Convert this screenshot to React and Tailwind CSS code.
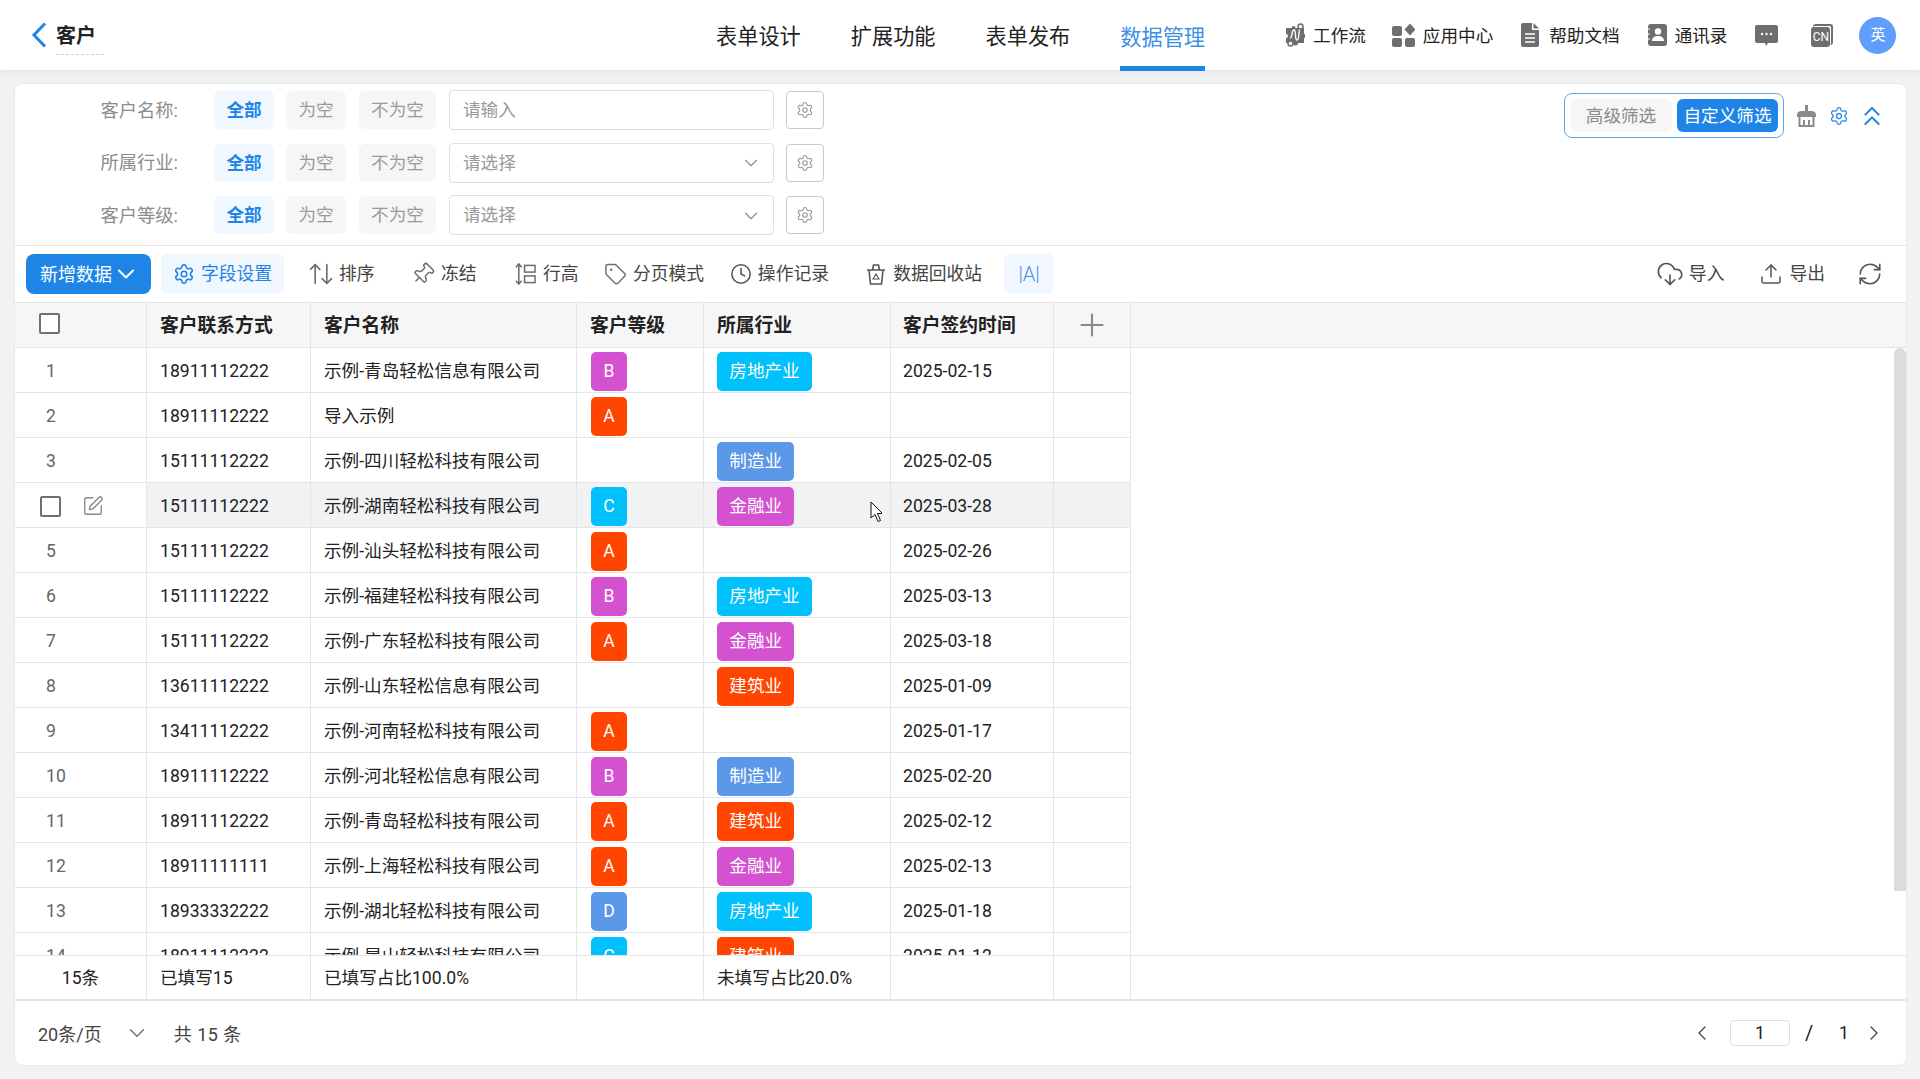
import {
  ArrowUpDown,
  ChevronDown,
  ChevronLeft,
  ChevronRight,
  ChevronsUp,
  Clock,
  CloudDownload,
  Pin,
  Plus,
  RefreshCw,
  Settings,
  SquarePen,
  Tag,
  Upload,
} from "lucide-react";

const levelColors = {
  A: "bg-[#ff4500]",
  B: "bg-[#d452cf]",
  C: "bg-[#00c1fb]",
  D: "bg-[#5c98e8]",
};

const industryColors = {
  房地产业: "bg-[#00c1fb]",
  制造业: "bg-[#5c98e8]",
  金融业: "bg-[#d452cf]",
  建筑业: "bg-[#ff4500]",
};

const rows = [
  ["18911112222", "示例-青岛轻松信息有限公司", "B", "房地产业", "2025-02-15"],
  ["18911112222", "导入示例", "A", "", ""],
  ["15111112222", "示例-四川轻松科技有限公司", "", "制造业", "2025-02-05"],
  ["15111112222", "示例-湖南轻松科技有限公司", "C", "金融业", "2025-03-28"],
  ["15111112222", "示例-汕头轻松科技有限公司", "A", "", "2025-02-26"],
  ["15111112222", "示例-福建轻松科技有限公司", "B", "房地产业", "2025-03-13"],
  ["15111112222", "示例-广东轻松科技有限公司", "A", "金融业", "2025-03-18"],
  ["13611112222", "示例-山东轻松信息有限公司", "", "建筑业", "2025-01-09"],
  ["13411112222", "示例-河南轻松科技有限公司", "A", "", "2025-01-17"],
  ["18911112222", "示例-河北轻松信息有限公司", "B", "制造业", "2025-02-20"],
  ["18911112222", "示例-青岛轻松科技有限公司", "A", "建筑业", "2025-02-12"],
  ["18911111111", "示例-上海轻松科技有限公司", "A", "金融业", "2025-02-13"],
  ["18933332222", "示例-湖北轻松科技有限公司", "D", "房地产业", "2025-01-18"],
  ["18911112222", "示例-昆山轻松科技有限公司", "C", "建筑业", "2025-01-12"],
];

const cell = "flex items-center border-r border-[#e5e5e7] h-full shrink-0 pt-[2px]";

function WorkflowIcon() {
  return (
    <svg viewBox="0 0 20 24" className="w-[20px] h-[24px] shrink-0" fill="none">
      <path d="M1 5h5.5a2 2 0 0 1 4 0H19v6a2 2 0 0 1 0 4v5h-6a2.5 2.5 0 0 1-5 0H1v-5a2 2 0 0 0 0-4z" fill="#6e6e6e" />
      <path d="M5 15c3 0 1-8 4-8s0 10 3 10 1-13 4-13" stroke="#fff" strokeWidth="1.4" />
      <circle cx="15.5" cy="3.5" r="2.5" fill="#fff" stroke="#6e6e6e" strokeWidth="1.5" />
      <circle cx="5.5" cy="20.5" r="2.5" fill="#fff" stroke="#6e6e6e" strokeWidth="1.5" />
    </svg>
  );
}

function AppsIcon() {
  return (
    <svg viewBox="0 0 23 24" className="w-[23px] h-[24px] shrink-0" fill="#6e6e6e">
      <rect x="0" y="3" width="10" height="10" rx="2" />
      <rect x="0" y="15" width="10" height="9" rx="2" />
      <rect x="13" y="15" width="10" height="9" rx="2" />
      <path d="M18 0.5l5.5 6-5.5 6-5.5-6z" />
    </svg>
  );
}

function DocIcon() {
  return (
    <svg viewBox="0 0 18 24" className="w-[18px] h-[24px] shrink-0 mr-[2px]">
      <path d="M2 0h9v7h7v15a2 2 0 0 1-2 2H2a2 2 0 0 1-2-2V2a2 2 0 0 1 2-2z" fill="#6e6e6e" />
      <path d="M12.5 0L18 5.5h-5.5z" fill="#6e6e6e" />
      <path d="M4 11h10M4 15h10M4 19h10" stroke="#fff" strokeWidth="1.6" />
    </svg>
  );
}

function ContactsIcon() {
  return (
    <svg viewBox="0 0 20 22" className="w-[20px] h-[22px] shrink-0">
      <rect x="1" y="0" width="19" height="22" rx="3" fill="#6e6e6e" />
      <circle cx="11" cy="7.5" r="3.2" fill="#fff" />
      <path d="M5 17c0-3.5 2.5-5 6-5s6 1.5 6 5z" fill="#fff" />
      <path d="M0 5h3M0 10h3M0 15h3" stroke="#fff" strokeWidth="1.2" />
    </svg>
  );
}

function ChatIcon() {
  return (
    <svg viewBox="0 0 23 21" className="w-[23px] h-[21px] shrink-0">
      <path d="M2 0h19a2 2 0 0 1 2 2v14a2 2 0 0 1-2 2h-8l-2 3-1-3H2a2 2 0 0 1-2-2V2a2 2 0 0 1 2-2z" fill="#6e6e6e" />
      <circle cx="7" cy="9" r="1.2" fill="#fff" />
      <circle cx="11.5" cy="9" r="1.2" fill="#fff" />
      <circle cx="16" cy="9" r="1.2" fill="#fff" />
    </svg>
  );
}

function CnIcon() {
  return (
    <div className="relative w-[22px] h-[23px] shrink-0">
      <div className="absolute right-0 top-0 w-[20px] h-[21px] rounded-[3px] border-t-2 border-r-2 border-[#6e6e6e]" />
      <div className="absolute left-0 bottom-0 w-[19px] h-[20px] rounded-[3px] bg-[#6e6e6e] text-white text-[12px] leading-[20px] text-center">
        CN
      </div>
    </div>
  );
}

function RowHeightIcon() {
  return (
    <svg viewBox="0 0 22 24" className="w-[21px] h-[24px] shrink-0" fill="none" stroke="#6e6e6e" strokeWidth="1.6">
      <path d="M4 2v20M1 5l3-3.5L7 5M1 19l3 3.5L7 19" />
      <rect x="10" y="3" width="11" height="7" />
      <rect x="10" y="14" width="11" height="7" />
    </svg>
  );
}

function RecycleIcon() {
  return (
    <svg viewBox="0 0 20 22" className="w-[20px] h-[22px] shrink-0" fill="none" stroke="#555" strokeWidth="1.6">
      <path d="M1 7h18M3 7l1.5 14h11L17 7M6.5 7l1-5h5l1 5" />
      <path d="M10 11l-3 5h6zM10 11l1.5 2.5" strokeWidth="1.1" />
    </svg>
  );
}

function BroomIcon() {
  return (
    <svg viewBox="0 0 19 22" className="w-[19px] h-[22px] shrink-0" fill="none" stroke="#8a8a8a" strokeWidth="2">
      <path d="M9.5 0v7" strokeWidth="3" />
      <path d="M1 10c0-2 2-3 4-3h9c2 0 4 1 4 3v1H1z" fill="#8a8a8a" />
      <path d="M2.5 11v10h14V11M7 15v6M12 15v6" />
    </svg>
  );
}

function ToolItem({ icon, label, className }) {
  return (
    <div className={`flex items-center gap-[7px] text-[17.8px] text-[#444] ${className}`}>
      {icon}
      <span className="pt-[1px]">{label}</span>
    </div>
  );
}

function HeaderTool({ icon, label, className }) {
  return (
    <div className={`flex items-center gap-[8px] text-[17.6px] text-[#222] ${className}`}>
      {icon}
      <span className="pt-[2px]">{label}</span>
    </div>
  );
}

function FilterRow({ label, placeholder, select }) {
  return (
    <div className="flex items-center h-10">
      <div className="w-[199px] pr-[36px] pt-[1px] text-right text-[18.3px] text-[#8c8c8c]">{label}</div>
      <div className="w-[60px] h-[38px] pt-[1px] rounded-md bg-[#f0f7ff] text-[#1e85e6] text-[17.6px] font-bold flex items-center justify-center">
        全部
      </div>
      <div className="w-[60px] h-[38px] pt-[1px] ml-[12px] rounded-md bg-[#f6f6f6] text-[#9a9a9a] text-[17.6px] flex items-center justify-center">
        为空
      </div>
      <div className="w-[77px] h-[38px] pt-[1px] ml-[13px] rounded-md bg-[#f6f6f6] text-[#9a9a9a] text-[17.6px] flex items-center justify-center">
        不为空
      </div>
      <div className="w-[325px] h-10 pt-[1px] ml-[13px] pl-[13px] pr-[11px] rounded-[4px] border border-[#dcdfe6] text-[17.6px] text-[#9a9a9a] flex items-center justify-between">
        <span>{placeholder}</span>
        {select && <ChevronDown className="w-[22px] h-[22px] text-[#8a8a8a]" strokeWidth={1.2} />}
      </div>
      <div className="w-[38px] h-[38px] ml-[12px] rounded-[4px] border border-[#c9c9c9] flex items-center justify-center">
        <Settings className="w-[18px] h-[18px] text-[#9a9a9a]" strokeWidth={1.5} />
      </div>
    </div>
  );
}

export default function App() {
  return (
    <div className="h-screen overflow-hidden bg-[#f1f2f4] flex flex-col font-['Roboto','Noto_Sans_CJK_SC',sans-serif] relative">
      {/* Header */}
      <header className="h-[70px] bg-white shadow-[0_2px_6px_rgba(0,0,0,0.06)] flex items-center shrink-0 relative">
        <svg viewBox="0 0 16 26" className="ml-[31px] w-[16px] h-[26px] shrink-0" fill="none" stroke="#1e85e6" strokeWidth="3">
          <path d="M14 1.5L3 13l11 11.5" />
        </svg>
        <div className="ml-[9px] text-[20px] font-bold text-[#222] border-b border-dashed border-[#cfcfcf] pb-[3px] pr-[8px] mt-[6px]">
          客户
        </div>

        <nav className="flex h-full ml-[612px] gap-[50px] text-[21.2px] text-[#222]">
          <div className="flex items-center pt-[4px]">表单设计</div>
          <div className="flex items-center pt-[4px]">扩展功能</div>
          <div className="flex items-center pt-[4px]">表单发布</div>
          <div className="flex items-center text-[#3b8fe6] border-b-[5px] border-[#1e85e6] pt-[9px] h-[71px]">数据管理</div>
        </nav>

        <HeaderTool icon={<WorkflowIcon />} label="工作流" className="ml-[80px]" />
        <HeaderTool icon={<AppsIcon />} label="应用中心" className="ml-[26px]" />
        <HeaderTool icon={<DocIcon />} label="帮助文档" className="ml-[28px]" />
        <HeaderTool icon={<ContactsIcon />} label="通讯录" className="ml-[27px]" />
        <div className="ml-[28px]"><ChatIcon /></div>
        <div className="ml-[33px]"><CnIcon /></div>
        <div className="ml-[26px] w-[37px] h-[37px] rounded-full bg-[#5f9ffb] text-white text-[15px] flex items-center justify-center">
          英
        </div>
      </header>

      {/* Card */}
      <div className="ml-[14px] mr-[13px] mt-[13px] h-[983px] bg-white rounded-lg border border-[#e8e9eb] flex flex-col overflow-hidden">
        {/* Filters */}
        <div className="flex justify-between items-start border-b border-[#e5e5e7] pt-[6px] pb-[10px] shrink-0">
          <div className="flex flex-col gap-[12.5px]">
            <FilterRow label="客户名称:" placeholder="请输入" />
            <FilterRow label="所属行业:" placeholder="请选择" select />
            <FilterRow label="客户等级:" placeholder="请选择" select />
          </div>
          <div className="flex items-center mt-[3px] mr-[18px]">
            <div className="w-[220px] h-[45px] rounded-lg border border-[#5ea5ea] flex items-center gap-[5px] px-[5px]">
              <div className="w-[102px] h-[33px] pt-[1px] rounded-md bg-[#f6f6f6] text-[#8c8c8c] text-[17.6px] flex items-center justify-center">
                高级筛选
              </div>
              <div className="w-[101px] h-[33px] pt-[1px] rounded-md bg-[#1e85e6] text-white text-[17.6px] flex items-center justify-center">
                自定义筛选
              </div>
            </div>
            <div className="ml-[13px]"><BroomIcon /></div>
            <Settings className="ml-[13px] w-[20px] h-[20px] text-[#1e85e6]" strokeWidth={1.5} />
            <ChevronsUp className="ml-[7px] w-[32px] h-[32px] text-[#1e85e6]" strokeWidth={1.5} />
          </div>
        </div>

        {/* Toolbar */}
        <div className="h-[56px] flex items-center pl-[11px] pr-[26px] shrink-0">
          <div className="w-[125px] h-10 rounded-lg bg-[#1e85e6] text-white text-[18px] flex items-center justify-center">
            <span className="pt-[1px]">新增数据</span>
            <ChevronDown className="w-[28px] h-[28px] -mr-[3px]" strokeWidth={1.8} />
          </div>
          <div className="ml-[10px] w-[123px] h-10 rounded-md bg-[#f0f7ff] text-[#1e85e6] text-[17.8px] flex items-center justify-center gap-[6px]">
            <Settings className="w-[22px] h-[22px]" strokeWidth={1.7} />
            <span className="pt-[1px]">字段设置</span>
          </div>
          <ToolItem icon={<ArrowUpDown className="w-[28px] h-[28px] -mx-[3px] text-[#6e6e6e]" strokeWidth={1.4} />} label="排序" className="ml-[26px]" />
          <ToolItem icon={<Pin className="w-[24px] h-[24px] -mx-[1px] text-[#6e6e6e] rotate-45" strokeWidth={1.5} />} label="冻结" className="ml-[37.4px]" />
          <ToolItem icon={<RowHeightIcon />} label="行高" className="ml-[38.4px]" />
          <ToolItem icon={<Tag className="w-[23px] h-[24px] -mx-[1px] text-[#6e6e6e]" strokeWidth={1.5} />} label="分页模式" className="ml-[26.4px]" />
          <ToolItem icon={<Clock className="w-[22px] h-[22px] -mx-[1px] text-[#555]" strokeWidth={1.7} />} label="操作记录" className="ml-[26.8px]" />
          <ToolItem icon={<RecycleIcon />} label="数据回收站" className="ml-[37.2px]" />
          <div className="ml-[22px] w-[50px] h-10 rounded-md bg-[#f0f7ff] text-[#3b8fe6] text-[20px] font-light flex items-center justify-center">
            |A|
          </div>
          <div className="flex-1" />
          <ToolItem icon={<CloudDownload className="w-[28px] h-[28px] -mx-[2px] text-[#555]" strokeWidth={1.4} />} label="导入" />
          <ToolItem icon={<Upload className="w-[24px] h-[24px] -mx-[1px] text-[#555]" strokeWidth={1.5} />} label="导出" className="ml-[36px]" />
          <RefreshCw className="ml-[31.5px] -mr-[2.5px] w-[26px] h-[26px] text-[#555]" strokeWidth={1.5} />
        </div>

        {/* Table head */}
        <div className="h-[46px] flex bg-[#f6f6f7] border-y border-[#e5e5e7] text-[18.8px] font-bold text-[#222] shrink-0">
          <div className={`${cell} w-[132px] pl-[24px]`}>
            <div className="w-[21px] h-[21px] rounded-[2px] border-2 border-[#707070] bg-white mb-[5px]" />
          </div>
          <div className={`${cell} w-[164px] pl-[13px]`}>客户联系方式</div>
          <div className={`${cell} w-[266px] pl-[13px]`}>客户名称</div>
          <div className={`${cell} w-[127px] pl-[13px]`}>客户等级</div>
          <div className={`${cell} w-[187px] pl-[13px]`}>所属行业</div>
          <div className={`${cell} w-[163px] pl-[12px]`}>客户签约时间</div>
          <div className={`${cell} w-[77px] justify-center`}>
            <Plus className="w-[36px] h-[36px] mb-[2px] text-[#8a8a8a]" strokeWidth={1.4} />
          </div>
        </div>

        {/* Table body */}
        <div className="flex-1 min-h-0 overflow-hidden relative">
          {rows.map((row, i) => (
            <div key={i} className="w-[1116px] h-[45px] flex border-b border-[#e5e5e7] text-[17.6px] text-[#222]">
              {i === 3 ? (
                <div className={`${cell} w-[132px] pl-[25px] gap-[21px]`}>
                  <div className="w-[21px] h-[21px] rounded-[2px] border-2 border-[#707070]" />
                  <SquarePen className="w-[22px] h-[22px] text-[#8a8a8a]" strokeWidth={1.5} />
                </div>
              ) : (
                <div className={`${cell} w-[132px] pl-[31px] text-[#666]`}>{i + 1}</div>
              )}
              <div className={`flex flex-1 h-full ${i === 3 ? "bg-[#f1f2f4]" : ""}`}>
                <div className={`${cell} w-[164px] pl-[13px]`}>{row[0]}</div>
                <div className={`${cell} w-[266px] pl-[13px]`}>{row[1]}</div>
                <div className={`${cell} w-[127px] pl-[14px]`}>
                  {row[2] && (
                    <div className={`w-[36px] h-[39px] rounded-[5px] text-white flex items-center justify-center ${levelColors[row[2]]}`}>
                      {row[2]}
                    </div>
                  )}
                </div>
                <div className={`${cell} w-[187px] pl-[13px]`}>
                  {row[3] && (
                    <div className={`h-[39px] px-[12.3px] rounded-[5px] text-white flex items-center ${industryColors[row[3]]}`}>
                      {row[3]}
                    </div>
                  )}
                </div>
                <div className={`${cell} w-[163px] pl-[12px]`}>{row[4]}</div>
                <div className={`${cell} w-[77px]`} />
              </div>
            </div>
          ))}
          <div className="absolute right-0 top-0 w-[12px] h-[543px] rounded-t-md bg-[#dcdcdc]" />
        </div>

        {/* Summary */}
        <div className="h-[46px] flex border-b-2 border-t border-[#e5e5e7] text-[17.6px] text-[#222] shrink-0 bg-white">
          <div className={`${cell} w-[132px] justify-center`}>15条</div>
          <div className={`${cell} w-[164px] pl-[13px]`}>已填写15</div>
          <div className={`${cell} w-[266px] pl-[13px]`}>已填写占比100.0%</div>
          <div className={`${cell} w-[127px]`} />
          <div className={`${cell} w-[187px] pl-[13px]`}>未填写占比20.0%</div>
          <div className={`${cell} w-[163px]`} />
          <div className={`${cell} w-[77px]`} />
        </div>

        {/* Pagination */}
        <div className="h-[64px] flex items-center pl-[23px] pr-[20px] text-[18px] text-[#444] shrink-0">
          <span className="pt-[2px]">20条/页</span>
          <ChevronDown className="ml-[22px] w-[26px] h-[26px] text-[#666]" strokeWidth={1.1} />
          <span className="ml-[24px] pt-[2px] tracking-[0.5px]">共 15 条</span>
          <div className="flex-1" />
          <ChevronLeft className="w-[24px] h-[24px] text-[#444]" strokeWidth={1.3} />
          <div className="ml-[16px] w-[60px] h-[26px] rounded-[4px] border border-[#dcdfe6] text-[#222] text-[17.6px] flex items-center justify-center">
            1
          </div>
          <span className="ml-[15px] w-[34px] text-[#222] text-[20px]">/</span>
          <span className="w-[23px] text-[#222] text-[17.6px]">1</span>
          <ChevronRight className="w-[24px] h-[24px] text-[#444]" strokeWidth={1.3} />
        </div>
      </div>

      {/* Mouse pointer */}
      <svg viewBox="0 0 12 22" className="absolute left-[870px] top-[501px] w-[12px] h-[22px]">
        <path d="M1 1v16l4-3.5 3 7 2.5-1-3-7H12.5z" fill="#fff" stroke="#111" strokeWidth="1" />
      </svg>
    </div>
  );
}
